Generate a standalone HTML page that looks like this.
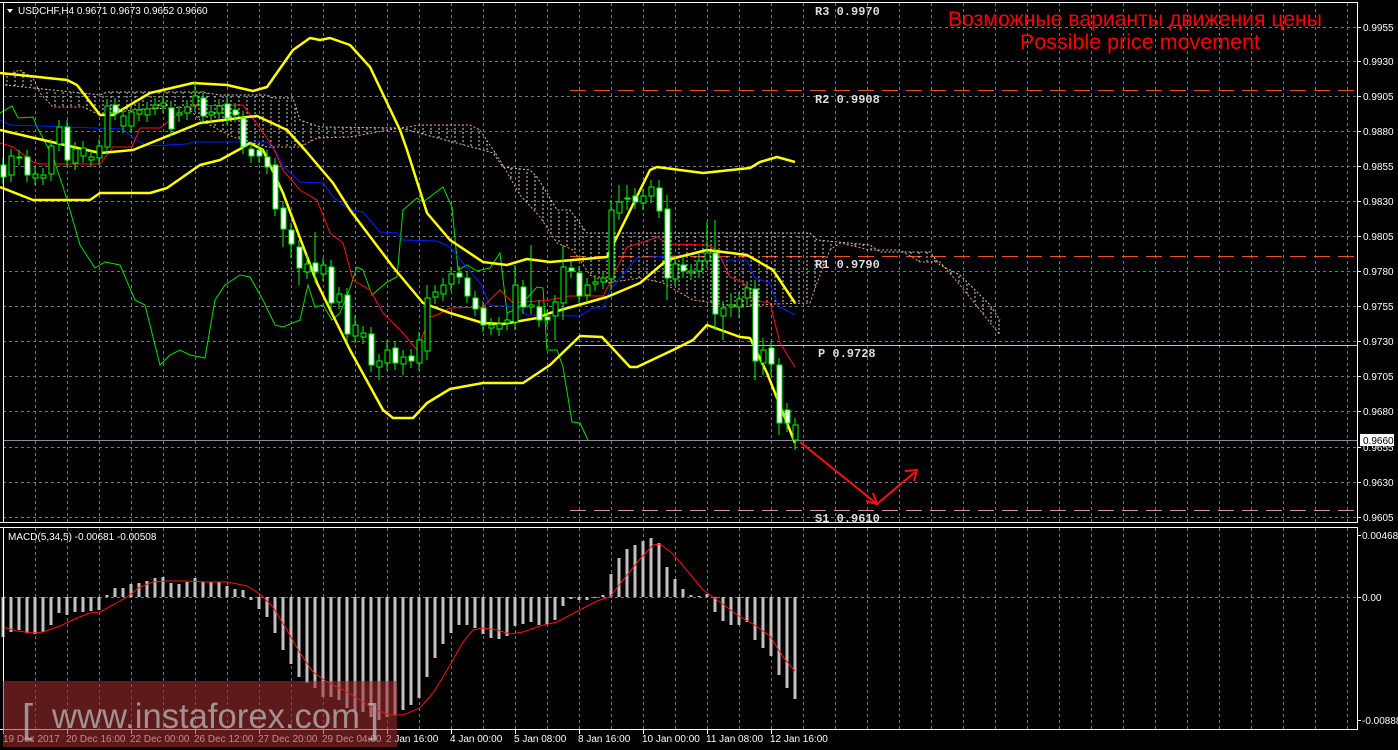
<!DOCTYPE html>
<html><head><meta charset="utf-8"><style>
html,body{margin:0;padding:0;background:#000;width:1398px;height:750px;overflow:hidden}
svg{display:block}
.ax{font-family:"Liberation Sans",sans-serif;font-size:10px;fill:#fff}
.dt{font-family:"Liberation Sans",sans-serif;font-size:10px;fill:#fff}
.pv{font-family:"Liberation Mono",monospace;font-size:12px;font-weight:bold;fill:#ddd}
</style></head><body>
<svg width="1398" height="750" viewBox="0 0 1398 750" xmlns="http://www.w3.org/2000/svg">
<defs>
<pattern id="hatch" width="8" height="4" patternUnits="userSpaceOnUse" x="3">
<line x1="4" y1="0" x2="4" y2="2" stroke="#d0d0d0" stroke-width="1"/>
</pattern>
</defs>
<rect width="1398" height="750" fill="#000"/>
<g stroke="#6c7884" stroke-width="1" stroke-dasharray="3,3" fill="none" shape-rendering="crispEdges">
<path d="M3 27.5H1357M3 61.5H1357M3 96.5H1357M3 131.5H1357M3 166.5H1357M3 201.5H1357M3 236.5H1357M3 271.5H1357M3 306.5H1357M3 341.5H1357M3 376.5H1357M3 411.5H1357M3 447.5H1357M3 482.5H1357M3 517.5H1357"/>
<path d="M35.5 3V522M67.5 3V522M99.5 3V522M131.5 3V522M163.5 3V522M195.5 3V522M227.5 3V522M259.5 3V522M291.5 3V522M323.5 3V522M355.5 3V522M387.5 3V522M419.5 3V522M451.5 3V522M483.5 3V522M515.5 3V522M547.5 3V522M579.5 3V522M611.5 3V522M643.5 3V522M675.5 3V522M707.5 3V522M739.5 3V522M771.5 3V522M803.5 3V522M835.5 3V522M867.5 3V522M899.5 3V522M931.5 3V522M963.5 3V522M995.5 3V522M1027.5 3V522M1059.5 3V522M1091.5 3V522M1123.5 3V522M1155.5 3V522M1187.5 3V522M1219.5 3V522M1251.5 3V522M1283.5 3V522M1315.5 3V522M1347.5 3V522"/>
<path d="M35.5 528V729M67.5 528V729M99.5 528V729M131.5 528V729M163.5 528V729M195.5 528V729M227.5 528V729M259.5 528V729M291.5 528V729M323.5 528V729M355.5 528V729M387.5 528V729M419.5 528V729M451.5 528V729M483.5 528V729M515.5 528V729M547.5 528V729M579.5 528V729M611.5 528V729M643.5 528V729M675.5 528V729M707.5 528V729M739.5 528V729M771.5 528V729M803.5 528V729M835.5 528V729M867.5 528V729M899.5 528V729M931.5 528V729M963.5 528V729M995.5 528V729M1027.5 528V729M1059.5 528V729M1091.5 528V729M1123.5 528V729M1155.5 528V729M1187.5 528V729M1219.5 528V729M1251.5 528V729M1283.5 528V729M1315.5 528V729M1347.5 528V729"/>
<path d="M3 597.5H1357"/>
</g>
<g stroke="#e8501e" stroke-width="1" stroke-dasharray="16,8" shape-rendering="crispEdges">
<line x1="570" y1="90.5" x2="1357" y2="90.5"/>
<line x1="570" y1="256.5" x2="1357" y2="256.5"/>
</g>
<line x1="570" y1="510.5" x2="1357" y2="510.5" stroke="#d89090" stroke-width="1" stroke-dasharray="16,8" shape-rendering="crispEdges"/>
<line x1="575" y1="345.5" x2="1357" y2="345.5" stroke="#d8c878" stroke-width="1" shape-rendering="crispEdges"/>
<line x1="3" y1="440.5" x2="1357" y2="440.5" stroke="#8090a0" stroke-width="1" shape-rendering="crispEdges"/>
<polygon fill="url(#hatch)" points="5,85 100,95 107,92 200,92 220,95 267,95 273,98 293,98 300,120 320,127 400,128 483,150 493,153 503,167 530,170 537,177 547,193 557,210 570,210 587,233 810,233 817,240 870,245 880,252 930,252 940,265 960,275 990,305 1000,320 1000,335 980,310 960,285 940,262 920,262 900,250 870,250 840,243 830,250 823,267 817,283 810,303 773,304 740,307 707,302 693,300 663,283 640,278 607,283 590,275 573,250 557,243 540,217 520,195 500,160 480,130 470,125 420,125 400,128 350,137 317,138 300,147 267,147 233,137 200,120 187,107 133,110 100,115 83,107 53,107 40,93 33,78 20,70 5,75"/>
<polyline fill="none" stroke="#ccc" stroke-width="1" stroke-dasharray="2,2" points="5,85 100,95 107,92 200,92 220,95 267,95 273,98 293,98 300,120 320,127 400,128 483,150 493,153 503,167 530,170 537,177 547,193 557,210 570,210 587,233 810,233 817,240 870,245 880,252 930,252 940,265 960,275 990,305 1000,320"/>
<polyline fill="none" stroke="#f0a070" stroke-width="1" stroke-dasharray="2,2" points="5,75 20,70 33,78 40,93 53,107 83,107 100,115 133,110 187,107 200,120 233,137 267,147 300,147 317,138 350,137 400,128 420,125 470,125 480,130 500,160 520,195 540,217 557,243 573,250 590,275 607,283 640,278 663,283 693,300 707,302 740,307 773,304 810,303 817,283 823,267 830,250 840,243 870,250 900,250 920,262 940,262 960,285 980,310 1000,335"/>
<polyline fill="none" stroke="#00e000" stroke-width="1" points="0,113 12,106 18,118 33,117 37,127 53,157 63,187 67,200 80,245 95,268 105,262 120,265 135,300 145,305 160,365 170,355 180,350 190,355 205,358 215,300 225,285 240,275 250,277 263,300 275,325 283,327 300,320 308,285 315,307 323,305 332,320 340,313 350,288 357,267 363,270 372,295 387,282 397,277 403,210 417,198 423,202 443,187 452,207 458,270 467,265 477,271 490,268 500,253 507,313 517,309 537,287 543,288 547,350 557,350 563,367 572,422 580,423 588,440"/>
<polyline fill="none" stroke="#0020ff" stroke-width="1" points="0,120 10,125 123,129 133,138 147,146 187,144 193,142 267,142 277,153 283,166 300,182 323,183 333,197 350,210 363,212 380,232 397,233 403,240 437,241 450,247 463,263 480,283 490,305 517,307 527,315 580,316 593,308 603,308 610,290 637,258 667,256 717,253 723,260 747,260 755,278 770,283 778,306 795,315"/>
<polyline fill="none" stroke="#ff1010" stroke-width="1" points="0,143 13,147 33,162 40,164 100,164 113,147 132,147 140,128 160,128 180,113 193,106 243,105 260,128 273,147 283,170 300,190 317,200 330,233 343,243 353,280 370,290 383,313 403,333 417,350 430,317 437,315 450,308 483,307 500,290 513,303 550,300 570,296 603,296 610,283 627,247 640,243 658,237 667,244 707,245 717,250 730,277 743,282 753,300 770,303 780,343 795,367"/>
<g fill="none" stroke="#ffff00" stroke-width="2.5" stroke-linejoin="round">
<polyline points="0,73 67,80 77,85 100,115 113,115 150,93 193,83 227,85 253,91 267,87 293,50 310,38 320,40 330,38 350,45 370,67 400,130 407,150 427,213 450,240 483,262 507,265 527,259 550,262 607,257 650,170 657,167 703,173 750,168 760,162 777,157 795,162"/>
<polyline points="0,130 43,140 100,153 133,150 200,123 247,117 257,116 287,130 305,150 333,183 350,210 393,267 423,303 450,313 483,323 503,324 537,318 550,313 607,297 640,283 667,260 707,250 747,255 773,270 795,303"/>
<polyline points="0,187 33,200 90,200 100,193 150,193 167,188 200,165 220,160 240,149 250,143 263,150 283,193 317,283 350,350 383,410 393,418 413,418 427,403 450,389 483,383 523,383 550,365 580,336 602,337 630,367 637,367 673,350 693,340 707,325 740,337 750,338 767,373 795,443"/>
</g>
<path fill="none" stroke="#00ff00" stroke-width="1" d="M3 158V184M11 149V182M19 150V165M27 150V182M35 167V185M43 168V185M51 139V181M59 120V151M67 120V167M75 142V170M83 141V163M91 150V167M99 139V165M107 99V154M115 98V120M123 109V133M131 105V133M139 103V121M147 102V122M155 98V115M163 96V113M171 101V136M179 106V122M187 100V120M195 82V112M203 91V123M211 105V122M219 99V120M227 97V125M235 103V122M243 111V154M251 142V163M259 143V163M267 150V174M275 158V216M283 201V247M291 223V258M299 240V285M307 255V279M315 232V282M323 258V281M331 260V310M339 287V309M347 288V341M355 315V343M363 326V344M371 327V372M379 354V380M387 340V370M395 341V370M403 350V375M411 349V368M419 332V370M427 285V360M435 285V304M443 278V301M451 267V291M459 266V284M467 271V303M475 291V316M483 301V332M491 318V335M499 317V336M507 313V330M515 265V330M523 280V314M531 245V314M539 300V327M547 310V327M555 295V340M563 245V320M571 261V278M579 266V303M587 278V302M595 275V291M603 271V289M611 200V290M619 185V220M627 185V210M635 188V209M643 189V210M651 180V203M659 180V218M667 195V300M675 257V286M683 258V278M691 264V280M699 254V278M707 222V268M715 220V330M723 301V340M731 293V317M739 292V318M747 281V305M755 280V380M763 338V375M771 341V375M779 358V435M787 403V432M795 418V450"/>
<path fill="#fff" stroke="#00ff00" stroke-width="1" d="M1 165h5v12h-5zM25 157h5v18h-5zM65 127h5v33h-5zM113 105h5v8h-5zM169 108h5v21h-5zM201 98h5v18h-5zM225 104h5v14h-5zM233 110h5v5h-5zM241 118h5v29h-5zM249 149h5v7h-5zM257 150h5v6h-5zM265 157h5v10h-5zM273 165h5v44h-5zM281 208h5v21h-5zM289 230h5v14h-5zM297 247h5v21h-5zM313 263h5v9h-5zM329 267h5v36h-5zM345 295h5v39h-5zM369 334h5v31h-5zM393 348h5v15h-5zM409 356h5v5h-5zM457 273h5v4h-5zM465 278h5v18h-5zM473 298h5v11h-5zM481 308h5v17h-5zM521 287h5v20h-5zM537 307h5v13h-5zM545 317h5v3h-5zM569 268h5v3h-5zM577 273h5v23h-5zM633 196h5v6h-5zM657 188h5v23h-5zM665 209h5v69h-5zM681 265h5v6h-5zM713 253h5v61h-5zM753 289h5v72h-5zM769 348h5v16h-5zM777 365h5v58h-5zM785 410h5v13h-5z"/>
<path fill="#000" stroke="#00ff00" stroke-width="1" d="M9 156h5v19h-5zM17 157h5v1h-5zM33 174h5v4h-5zM41 175h5v3h-5zM49 146h5v28h-5zM57 127h5v17h-5zM73 149h5v14h-5zM81 148h5v8h-5zM89 157h5v3h-5zM97 146h5v12h-5zM105 106h5v41h-5zM121 116h5v10h-5zM129 112h5v14h-5zM137 110h5v4h-5zM145 109h5v6h-5zM153 105h5v3h-5zM161 103h5v3h-5zM177 113h5v2h-5zM185 107h5v6h-5zM193 96h5v9h-5zM209 112h5v3h-5zM217 106h5v7h-5zM305 264h5v8h-5zM321 265h5v9h-5zM337 294h5v8h-5zM353 325h5v11h-5zM361 333h5v4h-5zM377 361h5v6h-5zM385 350h5v13h-5zM401 357h5v7h-5zM417 340h5v23h-5zM425 298h5v53h-5zM433 292h5v5h-5zM441 285h5v9h-5zM449 274h5v10h-5zM489 325h5v3h-5zM497 324h5v5h-5zM505 320h5v3h-5zM513 285h5v37h-5zM529 305h5v2h-5zM553 302h5v14h-5zM561 267h5v36h-5zM585 285h5v10h-5zM593 282h5v2h-5zM601 278h5v4h-5zM609 210h5v69h-5zM617 202h5v11h-5zM625 198h5v1h-5zM641 196h5v7h-5zM649 187h5v9h-5zM673 264h5v15h-5zM689 271h5v2h-5zM697 261h5v10h-5zM705 253h5v8h-5zM721 308h5v8h-5zM729 305h5v2h-5zM737 299h5v8h-5zM745 288h5v10h-5zM761 350h5v13h-5zM793 425h5v15h-5z"/>
<g stroke="#ff1010" stroke-width="2" fill="none">
<polyline points="800,442 877,504 915,472"/>
<polyline points="866,501 877,504 873,493"/>
<polyline points="905,471 917,470 914,481"/>
</g>
<text class="pv" x="815" y="15">R3 0.9970</text>
<text class="pv" x="815" y="103">R2 0.9908</text>
<text class="pv" x="815" y="268">R1 0.9790</text>
<text class="pv" x="818" y="357">P 0.9728</text>
<text class="pv" x="815" y="522">S1 0.9610</text>
<text x="1135" y="26" text-anchor="middle" font-family="'Liberation Sans','DejaVu Sans',sans-serif" font-size="21.5" fill="#ff0000" textLength="374" lengthAdjust="spacingAndGlyphs">Возможные варианты движения цены</text>
<text x="1140" y="49" text-anchor="middle" font-family="'Liberation Sans',sans-serif" font-size="21.5" fill="#ff0000" textLength="240" lengthAdjust="spacingAndGlyphs">Possible price movement</text>
<path fill="none" stroke="#c0c0c0" stroke-width="3" d="M3 597V637M11 597V632M19 597V630M27 597V633M35 597V634M43 597V632M51 597V625M59 597V613M67 597V615M75 597V612M83 597V612M91 597V611M99 597V610M107 597V595M115 597V588M123 597V588M131 597V584M139 597V583M147 597V581M155 597V578M163 597V577M171 597V583M179 597V584M187 597V582M195 597V578M203 597V582M211 597V582M219 597V582M227 597V586M235 597V589M243 597V590M251 597V600M259 597V609M267 597V617M275 597V633M283 597V650M291 597V664M299 597V677M307 597V683M315 597V688M323 597V697M331 597V697M339 597V700M347 597V708M355 597V710M363 597V712M371 597V717M379 597V720M387 597V717M395 597V715M403 597V710M411 597V705M419 597V698M427 597V677M435 597V658M443 597V644M451 597V633M459 597V625M467 597V625M475 597V628M483 597V634M491 597V638M499 597V639M507 597V636M515 597V626M523 597V624M531 597V622M539 597V625M547 597V624M555 597V620M563 597V606M571 597V599M579 597V600M587 597V600M595 597V598M603 597V595M611 597V574M619 597V558M627 597V549M635 597V545M643 597V541M651 597V538M659 597V543M667 597V567M675 597V579M683 597V589M691 597V595M699 597V596M707 597V594M715 597V612M723 597V621M731 597V625M739 597V625M747 597V622M755 597V640M763 597V648M771 597V656M779 597V675M787 597V688M795 597V699"/>
<polyline fill="none" stroke="#ff1010" stroke-width="1" points="3,627 17,631 33,633 43,632 60,626 77,618 90,613 100,612 113,605 127,597 140,587 153,582 167,581 187,581 207,582 227,582 247,586 260,594 273,607 287,630 300,653 313,672 327,682 343,690 360,700 377,710 390,715 403,715 420,708 433,693 440,682 453,660 463,642 473,630 483,628 497,630 510,634 523,632 540,626 557,622 580,610 597,601 610,597 623,580 640,559 653,545 660,544 673,554 690,574 703,590 720,602 737,615 753,624 770,636 783,657 795,671"/>
<text x="8" y="540" font-family="'Liberation Sans',sans-serif" font-size="10" fill="#fff">MACD(5,34,5) -0.00681 -0.00508</text>
<g stroke="#fff" stroke-width="1" fill="none" shape-rendering="crispEdges">
<path d="M0 2.5H1357.5V522.5H0"/>
<path d="M3.5 3V522"/>
<path d="M0 527.5H1357.5V729.5H0"/>
<path d="M3.5 528V729"/>
<path d="M1357 27.5h4M1357 61.5h4M1357 96.5h4M1357 131.5h4M1357 166.5h4M1357 201.5h4M1357 236.5h4M1357 271.5h4M1357 306.5h4M1357 341.5h4M1357 376.5h4M1357 411.5h4M1357 447.5h4M1357 482.5h4M1357 517.5h4M1357 535.5h4M1357 597.5h4M1357 720.5h4"/>
<path d="M3.5 730v4M67.5 730v4M131.5 730v4M195.5 730v4M259.5 730v4M323.5 730v4M387.5 730v4M451.5 730v4M515.5 730v4M579.5 730v4M643.5 730v4M707.5 730v4M771.5 730v4"/>
</g>
<g class="ax">
<text x="1363" y="31">0.9955</text><text x="1363" y="65">0.9930</text><text x="1363" y="100">0.9905</text><text x="1363" y="135">0.9880</text><text x="1363" y="170">0.9855</text><text x="1363" y="205">0.9830</text><text x="1363" y="240">0.9805</text><text x="1363" y="275">0.9780</text><text x="1363" y="310">0.9755</text><text x="1363" y="345">0.9730</text><text x="1363" y="380">0.9705</text><text x="1363" y="415">0.9680</text><text x="1363" y="451">0.9655</text><text x="1363" y="486">0.9630</text><text x="1363" y="521">0.9605</text>
<text x="1362" y="539">0.00468</text><text x="1362" y="601">0.00</text><text x="1362" y="724">-0.00888</text>
</g>
<rect x="1360" y="434" width="34" height="12" fill="#fff"/>
<text x="1363" y="444" font-family="'Liberation Sans',sans-serif" font-size="10" fill="#000">0.9660</text>
<polygon points="7,9 13,9 10,13" fill="#fff"/>
<text x="18" y="14" font-family="'Liberation Sans',sans-serif" font-size="10" fill="#fff">USDCHF,H4  0.9671 0.9673 0.9652 0.9660</text>
<g class="dt">
<text x="3" y="742">19 Dec 2017</text><text x="66" y="742">20 Dec 16:00</text><text x="130" y="742">22 Dec 00:00</text><text x="194" y="742">26 Dec 12:00</text><text x="258" y="742">27 Dec 20:00</text><text x="322" y="742">29 Dec 04:00</text><text x="386" y="742">2 Jan 16:00</text><text x="450" y="742">4 Jan 00:00</text><text x="514" y="742">5 Jan 08:00</text><text x="578" y="742">8 Jan 16:00</text><text x="642" y="742">10 Jan 00:00</text><text x="706" y="742">11 Jan 08:00</text><text x="770" y="742">12 Jan 16:00</text>
</g>
<rect x="3" y="681" width="394" height="66" fill="rgba(160,45,45,0.58)"/>
<text x="22" y="732" font-family="'Liberation Sans',sans-serif" font-size="40" fill="rgba(185,185,185,0.75)">[</text>
<text x="52" y="728" font-family="'Liberation Sans',sans-serif" font-size="35" fill="rgba(185,185,185,0.75)" textLength="308" lengthAdjust="spacingAndGlyphs">www.instaforex.com</text>
<text x="368" y="732" font-family="'Liberation Sans',sans-serif" font-size="40" fill="rgba(185,185,185,0.75)">]</text>
</svg>
</body></html>
